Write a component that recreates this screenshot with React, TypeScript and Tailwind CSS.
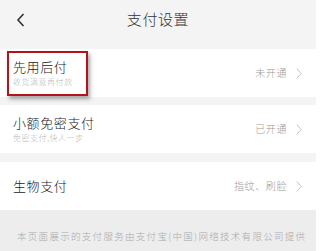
import React from "react";

const Chevron = () => (
  <svg width="6" height="11" viewBox="0 0 6 11" className="ml-[9px]" fill="none">
    <path d="M0.7 0.6 L5.2 5.5 L0.7 10.4" stroke="#c4c4c4" strokeWidth="1" />
  </svg>
);

const Row = ({ title, sub, right }: { title: string; sub?: string; right: string }) => (
  <div className="h-[48px] bg-white pl-[13px] pr-[14px] flex items-center justify-between">
    <div className="flex flex-col">
      <div className="text-[13px] leading-[16px] tracking-[0.6px] text-[#222] font-light">{title}</div>
      {sub && <div className="text-[8px] leading-[10px] mt-[2px] tracking-[0.5px] text-[#b8b8b8] font-light">{sub}</div>}
    </div>
    <div className="flex items-center">
      <span className="text-[10px] leading-[12px] tracking-[0.6px] text-[#9a9a9a] font-light">{right}</span>
      <Chevron />
    </div>
  </div>
);

export default function App() {
  return (
    <div
      className="w-[320px] h-[251px] bg-white overflow-hidden relative"
      style={{ fontFamily: '"Noto Sans CJK SC", "Noto Sans", sans-serif' }}
    >
      <div className="w-[316px] h-[251px] bg-[#f4f4f4] flex flex-col">
        <div className="h-[49px] relative flex items-start pt-[10px]">
          <svg width="10" height="14" viewBox="0 0 10 14" className="ml-[16px] mt-[3px]" fill="none">
            <path d="M7.5 1 L2 7 L7.5 13" stroke="#333" strokeWidth="1.6" />
          </svg>
          <div className="absolute left-0 right-0 top-[9px] text-center text-[15px] leading-[20px] tracking-[0.6px] text-[#333] font-light">
            支付设置
          </div>
        </div>
        <Row title="先用后付" sub="收货满意再付款" right="未开通" />
        <div className="h-[8px]" />
        <Row title="小额免密支付" sub="免密支付,快人一步" right="已开通" />
        <div className="h-[9px]" />
        <Row title="生物支付" right="指纹、刷脸" />
        <div className="flex-1 bg-[#ededed] pt-[20px] pl-[17px]">
          <div className="text-[9.5px] leading-[12px] tracking-[1.3px] text-[#aaaaaa] whitespace-nowrap font-light">
            本页面展示的支付服务由支付宝(中国)网络技术有限公司提供
          </div>
        </div>
      </div>
      <div className="absolute left-[7px] top-[51px] w-[81px] h-[45px] border-2 border-[#b3141b] shadow-[2px_3px_4px_rgba(0,0,0,0.35)]" />
    </div>
  );
}
